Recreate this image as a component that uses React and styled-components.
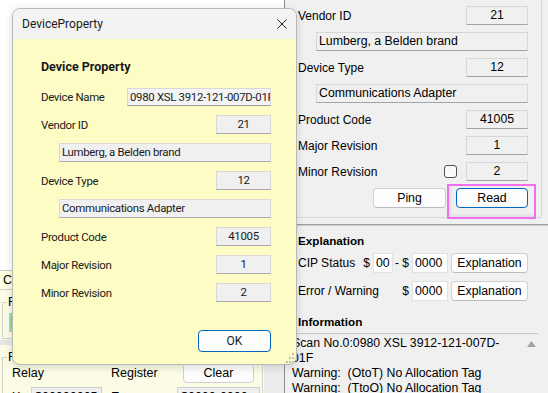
import styled, { createGlobalStyle } from "styled-components";

const dialogRows = [
  { label: "Vendor ID", value: "21", detail: "Lumberg, a Belden brand" },
  { label: "Device Type", value: "12", detail: "Communications Adapter" },
  { label: "Product Code", value: "41005" },
  { label: "Major Revision", value: "1" },
  { label: "Minor Revision", value: "2" },
];

const panelRows = [
  { label: "Vendor ID", value: "21", detail: "Lumberg, a Belden brand" },
  { label: "Device Type", value: "12", detail: "Communications Adapter" },
  { label: "Product Code", value: "41005" },
  { label: "Major Revision", value: "1" },
  { label: "Minor Revision", value: "2", check: true },
];

const infoLines = [
  "Scan No.0:0980 XSL 3912-121-007D-",
  "01F",
  "Warning:  (OtoT) No Allocation Tag",
  "Warning:  (TtoO) No Allocation Tag",
];

function App() {
  return (
    <>
      <GlobalStyle />
      <Screen>
        <LeftPane>
          <BlankArea />
          <TabStrip>Connection</TabStrip>
          <CreamBand>
            <GroupBox>
              <Legend>Forward Open</Legend>
              <StatusLamp>Forward Open OK</StatusLamp>
            </GroupBox>
          </CreamBand>
          <Separator />
          <BottomRow>
            <RelayArea>
              <GroupBox $wide>
                <Legend $shift>Force Output</Legend>
                <RelayGrid>
                  <span>Relay</span>
                  <span />
                  <span>Register</span>
                  <ClearButton type="button">Clear</ClearButton>
                  <span>X:</span>
                  <ValueBox $w={71}>$00000005</ValueBox>
                  <span>E</span>
                  <ValueBox $w={83}>$0000-0000</ValueBox>
                </RelayGrid>
              </GroupBox>
            </RelayArea>
            <Gutter />
          </BottomRow>
        </LeftPane>

        <RightPanel>
          <IdentitySection>
            {panelRows.map((row) => (
              <FieldGroup key={row.label}>
                <PanelRow>
                  <PanelLabel>{row.label}</PanelLabel>
                  {row.check && <CheckBox />}
                  <PanelValue>{row.value}</PanelValue>
                </PanelRow>
                {row.detail && <PanelDetail>{row.detail}</PanelDetail>}
              </FieldGroup>
            ))}
            <ButtonRow>
              <PanelButton type="button" $w={73}>Ping</PanelButton>
              <Highlight>
                <PanelButton type="button" $w={72} $primary>Read</PanelButton>
              </Highlight>
            </ButtonRow>
          </IdentitySection>
          <Divider />
          <ExplainSection>
            <SectionTitle>Explanation</SectionTitle>
            <ExplainRow>
              <PanelLabel>CIP Status</PanelLabel>
              <span>$</span>
              <HexInput $w={20}>00</HexInput>
              <Dash>- $</Dash>
              <HexInput $w={36}>0000</HexInput>
              <PanelButton type="button" $w={77}>Explanation</PanelButton>
            </ExplainRow>
            <ExplainRow $gap={8}>
              <PanelLabel>Error / Warning</PanelLabel>
              <span>$</span>
              <HexInput $w={36}>0000</HexInput>
              <PanelButton type="button" $w={77}>Explanation</PanelButton>
            </ExplainRow>
            <SectionTitle $gap={13}>Information</SectionTitle>
          </ExplainSection>
          <InfoBox>
            <InfoLines>
              {infoLines.map((line, i) => (
                <div key={i}>{line}</div>
              ))}
            </InfoLines>
            <ScrollTrack>
              <svg width="9" height="6" viewBox="0 0 9 6">
                <path d="M0 6 L4.5 0 L9 6 Z" fill="#a3a3a3" />
              </svg>
            </ScrollTrack>
          </InfoBox>
        </RightPanel>

        <Dialog>
          <TitleBar>
            <span>DeviceProperty</span>
            <svg width="10" height="10" viewBox="0 0 10 10">
              <path d="M0.5 0.5 L9.5 9.5 M9.5 0.5 L0.5 9.5" stroke="#1f1f1f" strokeWidth="1" />
            </svg>
          </TitleBar>
          <DialogBody>
            <Heading>Device Property</Heading>
            <Form>
              <DialogLabel>Device Name</DialogLabel>
              <NameBox>0980 XSL 3912-121-007D-01F</NameBox>
              {dialogRows.map((row) => (
                <FieldGroup key={row.label}>
                  <DialogLabel>{row.label}</DialogLabel>
                  <DialogValue>{row.value}</DialogValue>
                  {row.detail && <DialogDetail>{row.detail}</DialogDetail>}
                </FieldGroup>
              ))}
            </Form>
            <Footer>
              <OkButton type="button">OK</OkButton>
            </Footer>
          </DialogBody>
          <Grip width="12" height="10" viewBox="0 0 12 10">
            <rect x="9" y="0" width="2" height="2" />
            <rect x="6" y="4" width="2" height="2" />
            <rect x="9" y="4" width="2" height="2" />
            <rect x="3" y="8" width="2" height="2" />
            <rect x="6" y="8" width="2" height="2" />
            <rect x="9" y="8" width="2" height="2" />
          </Grip>
        </Dialog>
      </Screen>
    </>
  );
}

export default App;

const GlobalStyle = createGlobalStyle`
  html, body {
    margin: 0;
    padding: 0;
  }
  body {
    background: #f0f0f0;
    font-family: "Liberation Sans", Arial, sans-serif;
    color: #000;
  }
  * {
    box-sizing: border-box;
  }
`;

const Screen = styled.div`
  position: relative;
  width: 548px;
  height: 393px;
  overflow: hidden;
  display: grid;
  grid-template-columns: 284px 1fr;
  font-size: 12px;
`;

/* ---------- left pane (behind the dialog) ---------- */

const LeftPane = styled.div`
  display: flex;
  flex-direction: column;
  background: #fff;
`;

const BlankArea = styled.div`
  height: 270px;
  background: #fff;
`;

const TabStrip = styled.div`
  height: 20px;
  padding-left: 3px;
  line-height: 18px;
  font-size: 12.5px;
  background: #ffffe1;
  border-top: 1px solid #c6c6c6;
  border-bottom: 1px solid #d2d2c4;
`;

const CreamBand = styled.div`
  height: 49px;
  padding: 5px 0 0 2px;
  background: #fbfbe6;
  overflow: hidden;
`;

const GroupBox = styled.fieldset`
  margin: 0;
  padding: 3px 0 6px ${(p) => (p.$wide ? "9px" : "5px")};
  border: 1px solid #d4d4c6;
  min-width: 0;
`;

const Legend = styled.legend`
  padding: 0 1px;
  margin-left: ${(p) => (p.$shift ? "-5px" : "-1px")};
  line-height: 15px;
  font-size: 12.5px;
`;

const StatusLamp = styled.div`
  height: 19px;
  padding-left: 2px;
  line-height: 18px;
  font-size: 12.5px;
  white-space: nowrap;
  background: #98e398;
  border-left: 1px solid #fff;
  border-bottom: 1px solid #c9d6c9;
`;

const Separator = styled.div`
  height: 6px;
  background: #e6e6e6;
  border-top: 1px solid #f4f4f4;
`;

const BottomRow = styled.div`
  flex: 1;
  display: flex;
`;

const RelayArea = styled.div`
  width: 264px;
  padding: 5px 1px 0 2px;
  background: #fbfbe6;
`;

const Gutter = styled.div`
  flex: 1;
  background: #ececec;
`;

const RelayGrid = styled.div`
  display: grid;
  grid-template-columns: 19px 80px 66px 83px;
  grid-auto-rows: 20px;
  row-gap: 4px;
  align-items: center;
  margin-top: -5px;
  font-size: 12.5px;
`;

const ClearButton = styled.button`
  justify-self: center;
  width: 71px;
  height: 20px;
  padding: 0;
  font: inherit;
  background: #fdfdfd;
  border: 1px solid #cfcfcf;
  border-radius: 4px;
`;

const ValueBox = styled.div`
  width: ${(p) => p.$w}px;
  height: 20px;
  padding-left: 3px;
  line-height: 18px;
  background: #efefef;
  border: 1px solid #d0d0d0;
  white-space: nowrap;
  overflow: hidden;
`;

/* ---------- right panel ---------- */

const RightPanel = styled.div`
  display: flex;
  flex-direction: column;
  background: #f0f0f0;
  border-left: 1px solid #8e8e8e;
  min-width: 0;
`;

const IdentitySection = styled.div`
  display: flex;
  flex-direction: column;
  gap: 7px;
  margin-right: 6px;
  padding: 6px 13px 9px 13px;
  border-right: 1px solid #dadada;
  border-bottom: 1px solid #d8d8d8;
`;

const FieldGroup = styled.div`
  display: contents;
`;

const PanelRow = styled.div`
  display: flex;
  align-items: center;
  height: 19px;
`;

const PanelLabel = styled.span`
  flex: 1;
  white-space: nowrap;
`;

const PanelValue = styled.div`
  width: 62px;
  height: 19px;
  line-height: 17px;
  text-align: center;
  font-size: 12.3px;
  background: #f0f0f0;
  border: 1px solid #d6d6d6;
  border-bottom-color: #a4a4a4;
`;

const PanelDetail = styled.div`
  height: 19px;
  margin-left: 18px;
  padding-left: 2px;
  line-height: 17px;
  font-size: 12.3px;
  background: #f0f0f0;
  border: 1px solid #d6d6d6;
  border-bottom-color: #a4a4a4;
  white-space: nowrap;
`;

const CheckBox = styled.span`
  width: 13px;
  height: 13px;
  margin-right: 9px;
  background: #f9f9f9;
  border: 1px solid #505050;
  border-radius: 3px;
`;

const ButtonRow = styled.div`
  display: flex;
  justify-content: flex-end;
  gap: 10px;
`;

const PanelButton = styled.button`
  width: ${(p) => p.$w}px;
  height: 20px;
  padding: 0;
  font: inherit;
  font-size: 12.3px;
  color: #000;
  background: #fdfdfd;
  border: 1px solid ${(p) => (p.$primary ? "#0067c0" : "#d0d0d0")};
  border-bottom-color: ${(p) => (p.$primary ? "#0067c0" : "#bcbcbc")};
  border-radius: 4px;
`;

const Highlight = styled.span`
  position: relative;
  display: flex;

  &::after {
    content: "";
    position: absolute;
    left: -9px;
    right: -8px;
    top: -4px;
    bottom: -11px;
    border: 2px solid #ef6fef;
    box-shadow: inset 2px -2px 3px rgba(0, 0, 0, 0.08);
    pointer-events: none;
  }
`;

const Divider = styled.div`
  height: 2px;
  margin-top: 6px;
  border-top: 1px solid #9e9e9e;
  border-bottom: 1px solid #cdcdcd;
`;

const ExplainSection = styled.div`
  display: flex;
  flex-direction: column;
  padding: 7px 20px 0 13px;
`;

const SectionTitle = styled.div`
  margin-top: ${(p) => p.$gap || 0}px;
  line-height: 15px;
  font-size: 11.7px;
  font-weight: 700;
`;

const ExplainRow = styled.div`
  display: flex;
  align-items: center;
  gap: 3px;
  height: 20px;
  margin-top: ${(p) => p.$gap || 5}px;
`;

const Dash = styled.span`
  margin-left: -1px;
  white-space: pre;
`;

const HexInput = styled.div`
  width: ${(p) => p.$w}px;
  height: 20px;
  padding-left: 2px;
  line-height: 18px;
  font-size: 12.3px;
  background: #fff;
  border: 1px solid #e2e2e2;
`;

const InfoBox = styled.div`
  flex: 1;
  display: flex;
  margin: 4px 10px 0 0;
  border-top: 1px solid #c8c8c8;
`;

const InfoLines = styled.div`
  flex: 1;
  padding: 2px 0 0 7px;
  line-height: 15px;
  font-size: 12.3px;
  white-space: pre;
  overflow: hidden;
`;

const ScrollTrack = styled.div`
  width: 13px;
  display: flex;
  justify-content: center;
  padding-top: 7px;
`;

/* ---------- dialog ---------- */

const Dialog = styled.div`
  position: absolute;
  left: 12px;
  top: 8px;
  width: 285px;
  height: 357px;
  display: flex;
  flex-direction: column;
  overflow: hidden;
  background: #fdfcc4;
  border: 1px solid #b8b8b8;
  border-radius: 8px;
  box-shadow: 0 2px 8px rgba(0, 0, 0, 0.14);
  font-family: Roboto, "Noto Sans", sans-serif;
  color: #1a1a1a;
`;

const TitleBar = styled.div`
  flex: none;
  height: 30px;
  display: flex;
  align-items: center;
  justify-content: space-between;
  padding: 0 9px 0 9px;
  font-size: 12px;
  background: #f3f3f3;
`;

const DialogBody = styled.div`
  flex: 1;
  display: flex;
  flex-direction: column;
  padding: 20px 25px 12px 28px;
`;

const Heading = styled.div`
  line-height: 16px;
  font-size: 12.5px;
  font-weight: 700;
  margin-bottom: 12px;
`;

const Form = styled.div`
  display: grid;
  grid-template-columns: 1fr auto;
  grid-auto-rows: 19px;
  row-gap: 9px;
  align-items: center;
  font-size: 11.4px;
  letter-spacing: -0.3px;
`;

const DialogLabel = styled.span`
  white-space: nowrap;
`;

const fieldLook = `
  height: 19px;
  line-height: 17px;
  background: #f0f0f0;
  border: 1px solid #d8d8d8;
  border-bottom-color: #a8a8a8;
  white-space: nowrap;
  overflow: hidden;
`;

const NameBox = styled.div`
  ${fieldLook}
  justify-self: end;
  width: 144px;
  height: 18px;
  line-height: 16px;
  padding-left: 2px;
  background: #f4f4f4;
  border-bottom-color: #9a9a9a;
`;

const DialogValue = styled.div`
  ${fieldLook}
  justify-self: end;
  width: 55px;
  text-align: center;
`;

const DialogDetail = styled.div`
  ${fieldLook}
  grid-column: 1 / -1;
  margin-left: 18px;
  padding-left: 2px;
`;

const Footer = styled.div`
  margin-top: auto;
  display: flex;
  justify-content: flex-end;
`;

const OkButton = styled.button`
  width: 73px;
  height: 22px;
  padding: 0;
  font-family: inherit;
  font-size: 12px;
  color: #1a1a1a;
  background: #fdfdfd;
  border: 1px solid #0067c0;
  border-radius: 4px;
`;

const Grip = styled.svg`
  position: absolute;
  right: 1px;
  bottom: 1px;
  fill: #bdbdbd;
`;
